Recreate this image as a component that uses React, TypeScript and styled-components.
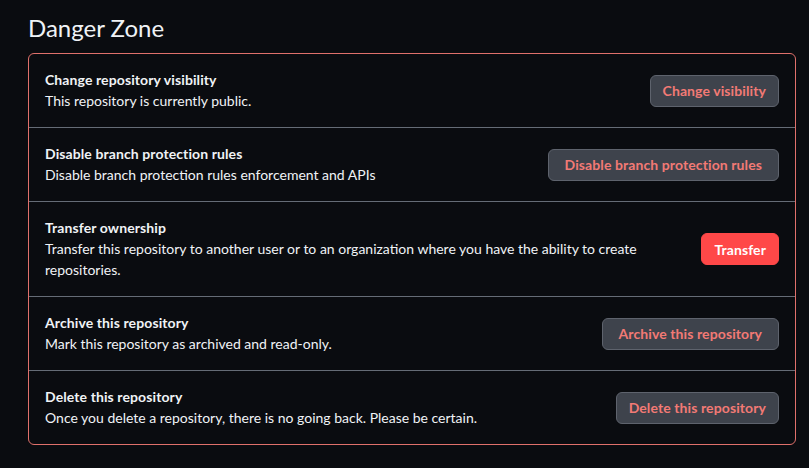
import React from "react";
import styled, { createGlobalStyle } from "styled-components";

const Global = createGlobalStyle`
  html, body { margin: 0; padding: 0; background: #0a0c10; }
  body {
    font-family: "Segoe UI", Lato, "Liberation Sans", sans-serif;
    color: #f0f3f6;
    -webkit-font-smoothing: antialiased;
  }
`;

const Page = styled.div`
  padding: 13px 13px 20px 28px;
  min-height: 468px;
  box-sizing: border-box;
`;

const Heading = styled.h2`
  margin: 0 0 10px;
  font-size: 24px;
  line-height: 30px;
  font-weight: 400;
  color: #f0f3f6;
`;

const Box = styled.div`
  width: 768px;
  box-sizing: border-box;
  border: 1px solid #e0706b;
  border-radius: 6px;
`;

const Row = styled.div`
  display: flex;
  align-items: center;
  gap: 16px;
  padding: 16px;
  & + & {
    border-top: 1px solid #656c76;
  }
`;

const Info = styled.div`
  flex: 1;
  min-width: 0;
`;

const Title = styled.div`
  font-size: 14px;
  line-height: 20px;
  font-weight: 700;
  letter-spacing: 0.1px;
  color: #f0f3f6;
`;

const Desc = styled.div`
  font-size: 14px;
  line-height: 21px;
  color: #f0f3f6;
`;

const Button = styled.button<{ $primary?: boolean; $wide?: boolean }>`
  flex: none;
  height: 32px;
  padding: 0 ${(p) => (p.$wide ? 16 : 12)}px;
  border-radius: 6px;
  font-family: inherit;
  font-size: 14px;
  font-weight: 700;
  letter-spacing: 0.1px;
  cursor: pointer;
  border: 1px solid ${(p) => (p.$primary ? "#ff4848" : "#5e636d")};
  background: ${(p) => (p.$primary ? "#ff4848" : "#3e434c")};
  color: ${(p) => (p.$primary ? "#ffffff" : "#f27a75")};
`;

const items = [
  {
    title: "Change repository visibility",
    desc: "This repository is currently public.",
    action: "Change visibility",
  },
  {
    title: "Disable branch protection rules",
    desc: "Disable branch protection rules enforcement and APIs",
    action: "Disable branch protection rules",
    wide: true,
  },
  {
    title: "Transfer ownership",
    desc: "Transfer this repository to another user or to an organization where you have the ability to create repositories.",
    action: "Transfer",
    primary: true,
  },
  {
    title: "Archive this repository",
    desc: "Mark this repository as archived and read-only.",
    action: "Archive this repository",
    wide: true,
  },
  {
    title: "Delete this repository",
    desc: "Once you delete a repository, there is no going back. Please be certain.",
    action: "Delete this repository",
  },
];

export default function App() {
  return (
    <>
      <Global />
      <Page>
        <Heading>Danger Zone</Heading>
        <Box>
          {items.map((it) => (
            <Row key={it.title}>
              <Info>
                <Title>{it.title}</Title>
                <Desc>{it.desc}</Desc>
              </Info>
              <Button $primary={it.primary} $wide={it.wide}>
                {it.action}
              </Button>
            </Row>
          ))}
        </Box>
      </Page>
    </>
  );
}
